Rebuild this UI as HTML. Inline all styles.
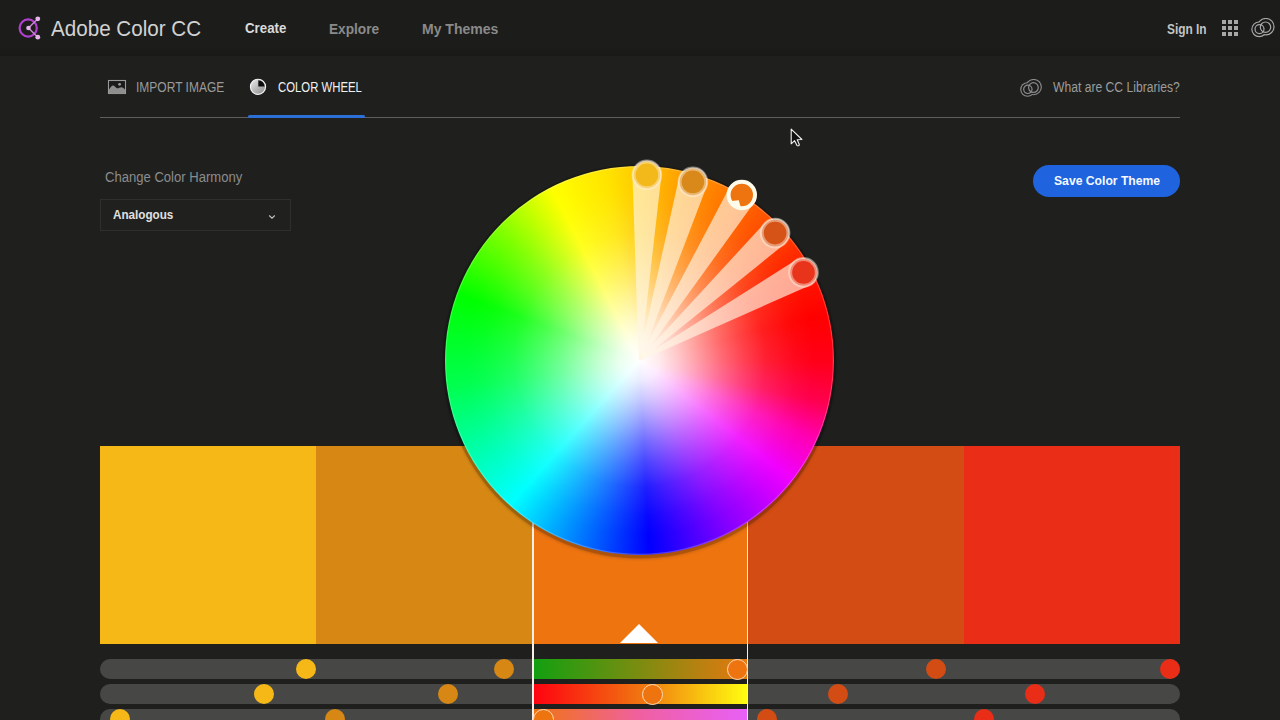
<!DOCTYPE html>
<html><head><meta charset="utf-8">
<style>
*{margin:0;padding:0;box-sizing:border-box}
html,body{width:1280px;height:720px;overflow:hidden;background:#1f201e;font-family:"Liberation Sans",sans-serif}
.abs{position:absolute}
#logo-t{left:51.0px;top:18.0px;font-size:22px;font-weight:normal;color:#d2d2d2;transform:scaleX(0.9371);transform-origin:0 0}
#create{left:245.3px;top:21.0px;font-size:14.5px;font-weight:bold;color:#dadada;transform:scaleX(0.9156);transform-origin:0 0}
#explore{left:329.26px;top:22.0px;font-size:14.5px;font-weight:bold;color:#8a8a8a;transform:scaleX(0.9423);transform-origin:0 0}
#mythemes{left:421.63px;top:22.0px;font-size:14.5px;font-weight:bold;color:#8a8a8a;transform:scaleX(0.9667);transform-origin:0 0}
#signin{left:1167.0px;top:22.0px;font-size:14px;font-weight:bold;color:#c4c4c4;transform:scaleX(0.8478);transform-origin:0 0}
#imp{left:136.34px;top:80.0px;font-size:14px;font-weight:normal;color:#9a9a9a;transform:scaleX(0.8578);transform-origin:0 0}
#cw{left:278.3px;top:80.0px;font-size:14px;font-weight:normal;color:#f0f0f0;transform:scaleX(0.8106);transform-origin:0 0}
#cclib{left:1053.0px;top:80.0px;font-size:14px;font-weight:normal;color:#9c9c9c;transform:scaleX(0.8664);transform-origin:0 0}
#harm{left:104.9px;top:169.9px;font-size:14px;font-weight:normal;color:#8c8c8c;transform:scaleX(0.9333);transform-origin:0 0}
#analog{left:113.0px;top:208.2px;font-size:13.2px;font-weight:bold;color:#e0e0e0;transform:scaleX(0.8853);transform-origin:0 0}
#savet{left:1053.75px;top:174.25px;font-size:13.7px;font-weight:bold;color:#f4f8ff;transform:scaleX(0.8887);transform-origin:0 0}

#hdr{position:absolute;left:0;top:0;width:1280px;height:56px;background:linear-gradient(#1c1d1b 0,#1c1d1b 46px,#191a18 56px)}
.t{position:absolute;white-space:nowrap;line-height:1}
#line{left:100px;top:117px;width:1080px;height:1px;background:#5e5e5e}
#uline{left:248px;top:115px;width:117px;height:3px;border-radius:1.5px;background:#2c6fd6}
#dd{left:100px;top:199px;width:191px;height:32px;border:1px solid #2f302e;background:#20211f}
#save{left:1033px;top:165px;width:147px;height:32px;border-radius:16px;background:#1f63de}
.sw{position:absolute;top:446px;height:198px;width:216px}
.track{position:absolute;left:100px;width:1080px;height:20px;border-radius:10px;background:#474846}
.gtrack{position:absolute;left:532px;width:216px;height:20px}
.knob{position:absolute;width:20px;height:20px;border-radius:50%}
.ring{position:absolute;width:21px;height:21px;border-radius:50%;border:1.8px solid #ffdcb8}
#wheel{left:445.0px;top:165.5px;width:389.0px;height:389.0px;border-radius:50%;box-shadow:inset 0 0 0 1.2px rgba(255,255,255,0.22),0 1px 0 2.5px rgba(0,0,0,0.16),0 2.5px 3px 2px rgba(0,0,0,0.14)}
.vl{position:absolute;top:446px;width:1.5px;height:274px;background:#f8f0e8}
</style></head><body>
<div id="hdr"></div>
<svg class="abs" style="left:0;top:0" width="60" height="56">
  <circle cx="28.2" cy="28" r="8.6" fill="none" stroke="#b23fcf" stroke-width="2.2"/>
  <line x1="28.5" y1="28" x2="37.8" y2="18.8" stroke="#c98ad8" stroke-width="1.4"/>
  <line x1="28.5" y1="28" x2="37.8" y2="37.2" stroke="#c98ad8" stroke-width="1.4"/>
  <circle cx="28.5" cy="28" r="2.3" fill="#e6b6ea"/>
  <circle cx="37.8" cy="18.8" r="2.4" fill="#e6b6ea"/>
  <circle cx="37.8" cy="37.2" r="2.4" fill="#e6b6ea"/>
</svg>
<div id="logo-t" class="t">Adobe Color CC</div>
<div id="create" class="t nav">Create</div>
<div id="explore" class="t nav">Explore</div>
<div id="mythemes" class="t nav">My Themes</div>
<div id="signin" class="t">Sign In</div>
<svg class="abs" style="left:1220px;top:18px" width="20" height="20">
  <g fill="#a8a8a8">
    <rect x="2" y="2" width="4" height="4"/><rect x="8" y="2" width="4" height="4"/><rect x="14" y="2" width="4" height="4"/>
    <rect x="2" y="8" width="4" height="4"/><rect x="8" y="8" width="4" height="4"/><rect x="14" y="8" width="4" height="4"/>
    <rect x="2" y="14" width="4" height="4"/><rect x="8" y="14" width="4" height="4"/><rect x="14" y="14" width="4" height="4"/>
  </g>
</svg>
<svg class="abs" style="left:1250px;top:18px" width="28" height="22"><circle cx="9.20" cy="11.30" r="7.90" fill="#a8a8a8"/><circle cx="15.80" cy="8.70" r="8.80" fill="#a8a8a8"/><circle cx="9.20" cy="11.30" r="6.70" fill="#1c1c1b"/><circle cx="15.80" cy="8.70" r="7.60" fill="#1c1c1b"/><circle cx="9.50" cy="11.10" r="4.50" fill="none" stroke="#a8a8a8" stroke-width="1.2"/><circle cx="15.50" cy="9.20" r="5.20" fill="none" stroke="#a8a8a8" stroke-width="1.2"/></svg>

<svg class="abs" style="left:106px;top:78px" width="22" height="18">
  <rect x="2.5" y="2.5" width="17" height="13" fill="#1a1a1a" stroke="#999" stroke-width="1.1"/>
  <path d="M3 15.5 L3 11.5 C4.5 9.5 5.5 7.6 7 7.6 C8.6 7.6 9.5 9.8 11 10.2 C12.5 10.6 13.6 9.2 15.2 9.2 C16.8 9.2 18 10.5 19 11.5 L19 15.5 Z" fill="#8e8e8e"/>
  <circle cx="13.6" cy="6.3" r="1.4" fill="#9a9a9a"/>
</svg>
<div id="imp" class="t tab">IMPORT IMAGE</div>
<svg class="abs" style="left:248px;top:77px" width="20" height="20">
  <defs><linearGradient id="cwg" x1="0" y1="0" x2="1" y2="1"><stop offset="0" stop-color="#f0f0f0"/><stop offset="0.5" stop-color="#b8b8b8"/><stop offset="1" stop-color="#8a8a8a"/></linearGradient></defs>
  <circle cx="10" cy="9.8" r="7.6" fill="url(#cwg)" stroke="#f4f4f4" stroke-width="1.1"/>
  <path d="M10.3 9.5 L10.3 3.2 A6.4 6.4 0 0 1 16.6 9.5 Z" fill="#0c0c0c"/>
</svg>
<div id="cw" class="t tab">COLOR WHEEL</div>
<div id="line" class="abs"></div>
<div id="uline" class="abs"></div>
<svg class="abs" style="left:1019px;top:79px" width="28" height="22"><circle cx="8.56" cy="10.51" r="7.35" fill="#8c8c8c"/><circle cx="14.69" cy="8.09" r="8.18" fill="#8c8c8c"/><circle cx="8.56" cy="10.51" r="6.23" fill="#1f201e"/><circle cx="14.69" cy="8.09" r="7.07" fill="#1f201e"/><circle cx="8.84" cy="10.32" r="4.19" fill="none" stroke="#8c8c8c" stroke-width="1.2"/><circle cx="14.42" cy="8.56" r="4.84" fill="none" stroke="#8c8c8c" stroke-width="1.2"/></svg>
<div id="cclib" class="t">What are CC Libraries?</div>

<div id="harm" class="t">Change Color Harmony</div>
<div id="dd" class="abs"></div>
<div id="analog" class="t">Analogous</div>
<svg class="abs" style="left:267px;top:212.5px" width="10" height="8"><path d="M2.2 2.5 L5 5.2 L7.8 2.5" fill="none" stroke="#c0c0c0" stroke-width="1.1"/></svg>
<div id="save" class="abs"></div>
<div id="savet" class="t">Save Color Theme</div>

<div class="sw" style="left:100px;background:#f5b816"></div>
<div class="sw" style="left:316px;background:#d78714"></div>
<div class="sw" style="left:532px;background:#ee7410"></div>
<div class="sw" style="left:748px;background:#d34c14"></div>
<div class="sw" style="left:964px;background:#e92d16"></div>

<div class="track" style="top:659px"></div>
<div class="track" style="top:684px"></div>
<div class="track" style="top:709px"></div>
<div class="gtrack" style="top:659px;background:linear-gradient(90deg,#10a010,#e87810)"></div>
<div class="gtrack" style="top:684px;background:linear-gradient(90deg,#ff0010,#f07410 50%,#ffff10)"></div>
<div class="gtrack" style="top:709px;background:linear-gradient(90deg,#f07410,#f060a0 50%,#e860f8)"></div>
<div class="vl" style="left:532px"></div>
<div class="vl" style="left:746.5px"></div>
<div class="knob" style="left:296px;top:659px;background:#f5b816"></div>
<div class="knob" style="left:494px;top:659px;background:#d78714"></div>
<div class="ring" style="left:726.5px;top:658.5px;background:#ee7410"></div>
<div class="knob" style="left:926px;top:659px;background:#d34c14"></div>
<div class="knob" style="left:1160px;top:659px;background:#e92d16"></div>
<div class="knob" style="left:254px;top:684px;background:#f5b816"></div>
<div class="knob" style="left:438px;top:684px;background:#d78714"></div>
<div class="ring" style="left:641.5px;top:683.5px;background:#ee7410"></div>
<div class="knob" style="left:828px;top:684px;background:#d34c14"></div>
<div class="knob" style="left:1025px;top:684px;background:#e92d16"></div>
<div class="knob" style="left:110px;top:709px;background:#f5b816"></div>
<div class="knob" style="left:325px;top:709px;background:#d78714"></div>
<div class="ring" style="left:532.5px;top:708.5px;background:#ee7410"></div>
<div class="knob" style="left:757px;top:709px;background:#d34c14"></div>
<div class="knob" style="left:974px;top:709px;background:#e92d16"></div>

<div id="wheel" class="abs" style="background:radial-gradient(circle closest-side,#fff 0,rgba(255,255,255,0.92) 10%,rgba(255,255,255,0.78) 20%,rgba(255,255,255,0.6) 31%,rgba(255,255,255,0.42) 42%,rgba(255,255,255,0.28) 52%,rgba(255,255,255,0.12) 65%,rgba(255,255,255,0.03) 80%,rgba(255,255,255,0) 90%),conic-gradient(from 0deg,#ffc800 0deg,#ff9900 15deg,#ff7000 30deg,#ff4800 45deg,#ff1a00 62deg,#ff0000 76deg,#ff0018 90deg,#ff0050 103deg,#ff00b0 114deg,#f000ff 128deg,#8000ff 153deg,#0000ff 177deg,#00ffff 222deg,#00ff50 262deg,#00ff00 290deg,#80ff00 313deg,#ffff00 333deg,#ffe400 350deg,#ffc800 360deg)"></div>
<svg class="abs" style="left:0;top:0" width="1280" height="720">
<path d="M640.3 360.0 L661.4 175.5 A14.5 14.5 0 0 0 632.4 174.4 L638.7 360.0 Z" fill="rgba(255,246,228,0.66)"/>
<path d="M640.3 360.2 L706.8 186.1 A14.5 14.5 0 0 0 679.0 177.8 L638.7 359.8 Z" fill="rgba(255,246,228,0.66)"/>
<path d="M640.2 360.4 L754.2 202.6 A14.5 14.5 0 0 0 729.5 187.3 L638.8 359.6 Z" fill="rgba(255,246,228,0.66)"/>
<path d="M640.0 360.6 L785.0 243.7 A14.5 14.5 0 0 0 765.2 222.5 L639.0 359.4 Z" fill="rgba(255,246,228,0.66)"/>
<path d="M639.9 360.7 L810.3 285.2 A14.5 14.5 0 0 0 796.7 259.6 L639.1 359.3 Z" fill="rgba(255,246,228,0.66)"/>
<circle cx="646.9" cy="174.9" r="13.3" fill="#f3b81a" stroke="rgba(255,240,225,0.45)" stroke-width="4"/>
<circle cx="692.9" cy="181.9" r="13.3" fill="#d8891a" stroke="rgba(255,240,225,0.45)" stroke-width="4"/>
<circle cx="741.8" cy="195.0" r="13.2" fill="#ee7410" stroke="#fffbea" stroke-width="4"/>
<path d="M731.3 201.0 L738.8 200.3 L740.8 207.5 L733.8 205.0 Z" fill="#fffbea"/>
<circle cx="775.1" cy="233.1" r="13.3" fill="#d65318" stroke="rgba(255,240,225,0.45)" stroke-width="4"/>
<circle cx="803.5" cy="272.4" r="13.3" fill="#e8341a" stroke="rgba(255,240,225,0.45)" stroke-width="4"/>
</svg>
<div class="abs" style="left:620px;top:624px;width:0;height:0;border-left:19px solid transparent;border-right:19px solid transparent;border-bottom:19px solid #fff"></div>
<svg class="abs" style="left:780px;top:120px" width="30" height="35">
  <path d="M11.2 9.2 L11.2 23.8 L14.6 20.7 L16.9 25.3 Q17.7 26.2 19 25.5 L19.3 24.5 L17.2 19.8 L21.9 19.5 Z" fill="#111" stroke="#f2f2f2" stroke-width="1.1" stroke-linejoin="round"/>
</svg>
</body></html>
